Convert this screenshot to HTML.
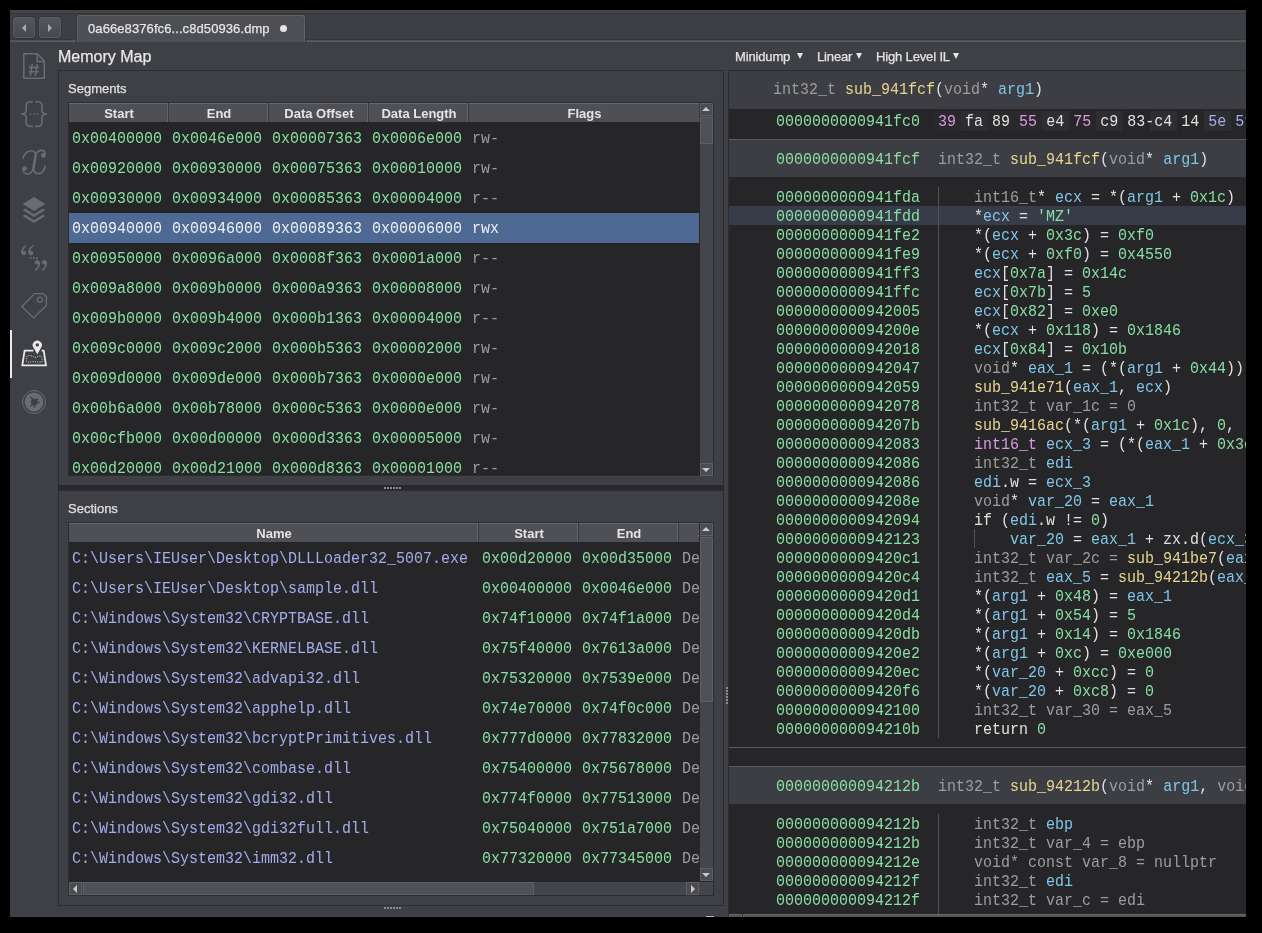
<!DOCTYPE html><html><head><meta charset="utf-8"><style>
*{margin:0;padding:0;box-sizing:border-box}
html,body{width:1262px;height:933px;overflow:hidden;background:#000}
.ab{position:absolute}
.sans{font-family:"Liberation Sans", sans-serif;-webkit-text-stroke:0.25px currentColor}
.mono{font-family:"Liberation Mono", monospace;font-size:15px;white-space:pre;transform:scaleY(1.09);transform-origin:0 1.6px}
.t{position:absolute;white-space:pre;line-height:1}
#wrap{position:absolute;left:0;top:0;width:1262px;height:933px;will-change:transform}
</style></head><body><div id="wrap">

<div class="ab" style="left:10px;top:10px;width:1236px;height:907px;background:#3f4045"></div>
<div class="ab" style="left:10px;top:10px;width:1236px;height:31px;background:#3e3f44"></div>
<div class="ab" style="left:10px;top:10px;width:1236px;height:3px;background:#444549"></div>
<div class="ab" style="left:10px;top:13px;width:1236px;height:1px;background:#37383c"></div>
<div class="ab" style="left:10px;top:39px;width:1236px;height:1px;background:#37383c"></div>
<div class="ab" style="left:10px;top:40px;width:1236px;height:1px;background:#535459"></div>
<div class="ab" style="left:10px;top:41px;width:1236px;height:1px;background:#5a5b60"></div>
<div class="ab" style="left:13px;top:17px;width:22px;height:21px;border:1px solid #5a5b60;border-radius:3px;background:linear-gradient(#55565b,#48494e);box-shadow:0 0 0 1px #35363a"></div>
<div class="ab" style="left:22px;top:23.5px;width:0;height:0;border-top:4px solid transparent;border-bottom:4px solid transparent;border-right:4.5px solid #a9aaae"></div>
<div class="ab" style="left:39px;top:17px;width:22px;height:21px;border:1px solid #5a5b60;border-radius:3px;background:linear-gradient(#55565b,#48494e);box-shadow:0 0 0 1px #35363a"></div>
<div class="ab" style="left:48px;top:24px;width:0;height:0;border-top:4px solid transparent;border-bottom:4px solid transparent;border-left:4px solid #a9aaae"></div>
<div class="ab" style="left:77px;top:15px;width:228px;height:27px;background:#4e4f54;border:1px solid #646569;border-bottom:none;border-radius:3px 3px 0 0;box-shadow:-1px 0 0 0 #35363a,1px 0 0 0 #35363a,0 -1px 0 0 #35363a"></div>
<div class="t sans" style="left:88px;top:22px;font-size:13px;letter-spacing:0.09px;color:#e6e6e6">0a66e8376fc6...c8d50936.dmp</div>
<div class="ab" style="left:280px;top:24.5px;width:7px;height:7px;border-radius:50%;background:#e6e6e6"></div>
<div class="t sans" style="left:58px;top:49px;font-size:16px;color:#e8e8e8">Memory Map</div>
<div class="ab" style="left:58px;top:70px;width:666px;height:416px;border:1px solid #2c2d31"></div>
<div class="t sans" style="left:68px;top:82px;font-size:13px;color:#e0e0e0">Segments</div>
<div class="ab" style="left:68px;top:102px;width:646px;height:374px;background:#262629;border:1px solid #2c2d31"></div>
<div class="ab" style="left:69px;top:103px;width:630px;height:19px;background:#4f5055;border-top:1px solid #69696e"></div>
<div class="ab" style="left:167px;top:103px;width:1px;height:19px;background:#646569"></div>
<div class="ab" style="left:168px;top:103px;width:1px;height:19px;background:#3a3b3f"></div>
<div class="t sans" style="left:69px;width:100px;text-align:center;top:107px;font-size:13px;font-weight:bold;-webkit-text-stroke:0;color:#e4e4e4">Start</div>
<div class="ab" style="left:267px;top:103px;width:1px;height:19px;background:#646569"></div>
<div class="ab" style="left:268px;top:103px;width:1px;height:19px;background:#3a3b3f"></div>
<div class="t sans" style="left:169px;width:100px;text-align:center;top:107px;font-size:13px;font-weight:bold;-webkit-text-stroke:0;color:#e4e4e4">End</div>
<div class="ab" style="left:367px;top:103px;width:1px;height:19px;background:#646569"></div>
<div class="ab" style="left:368px;top:103px;width:1px;height:19px;background:#3a3b3f"></div>
<div class="t sans" style="left:269px;width:100px;text-align:center;top:107px;font-size:13px;font-weight:bold;-webkit-text-stroke:0;color:#e4e4e4">Data Offset</div>
<div class="ab" style="left:467px;top:103px;width:1px;height:19px;background:#646569"></div>
<div class="ab" style="left:468px;top:103px;width:1px;height:19px;background:#3a3b3f"></div>
<div class="t sans" style="left:369px;width:100px;text-align:center;top:107px;font-size:13px;font-weight:bold;-webkit-text-stroke:0;color:#e4e4e4">Data Length</div>
<div class="ab" style="left:699px;top:103px;width:1px;height:19px;background:#3a3b3f"></div>
<div class="t sans" style="left:469px;width:231px;text-align:center;top:107px;font-size:13px;font-weight:bold;-webkit-text-stroke:0;color:#e4e4e4">Flags</div>
<div class="ab" style="left:69px;top:122px;width:631px;height:353px;overflow:hidden">
<div class="t mono" style="left:3px;top:9px;color:#88dfa3">0x00400000</div>
<div class="t mono" style="left:103px;top:9px;color:#88dfa3">0x0046e000</div>
<div class="t mono" style="left:203px;top:9px;color:#88dfa3">0x00007363</div>
<div class="t mono" style="left:303px;top:9px;color:#88dfa3">0x0006e000</div>
<div class="t mono" style="left:403px;top:9px;color:#9d9d9f">rw-</div>
<div class="t mono" style="left:3px;top:39px;color:#88dfa3">0x00920000</div>
<div class="t mono" style="left:103px;top:39px;color:#88dfa3">0x00930000</div>
<div class="t mono" style="left:203px;top:39px;color:#88dfa3">0x00075363</div>
<div class="t mono" style="left:303px;top:39px;color:#88dfa3">0x00010000</div>
<div class="t mono" style="left:403px;top:39px;color:#9d9d9f">rw-</div>
<div class="t mono" style="left:3px;top:69px;color:#88dfa3">0x00930000</div>
<div class="t mono" style="left:103px;top:69px;color:#88dfa3">0x00934000</div>
<div class="t mono" style="left:203px;top:69px;color:#88dfa3">0x00085363</div>
<div class="t mono" style="left:303px;top:69px;color:#88dfa3">0x00004000</div>
<div class="t mono" style="left:403px;top:69px;color:#9d9d9f">r--</div>
<div class="ab" style="left:0;top:91px;width:630px;height:30px;background:#4e6994"></div>
<div class="t mono" style="left:3px;top:99px;color:#f0f0f0">0x00940000</div>
<div class="t mono" style="left:103px;top:99px;color:#f0f0f0">0x00946000</div>
<div class="t mono" style="left:203px;top:99px;color:#f0f0f0">0x00089363</div>
<div class="t mono" style="left:303px;top:99px;color:#f0f0f0">0x00006000</div>
<div class="t mono" style="left:403px;top:99px;color:#f0f0f0">rwx</div>
<div class="t mono" style="left:3px;top:129px;color:#88dfa3">0x00950000</div>
<div class="t mono" style="left:103px;top:129px;color:#88dfa3">0x0096a000</div>
<div class="t mono" style="left:203px;top:129px;color:#88dfa3">0x0008f363</div>
<div class="t mono" style="left:303px;top:129px;color:#88dfa3">0x0001a000</div>
<div class="t mono" style="left:403px;top:129px;color:#9d9d9f">r--</div>
<div class="t mono" style="left:3px;top:159px;color:#88dfa3">0x009a8000</div>
<div class="t mono" style="left:103px;top:159px;color:#88dfa3">0x009b0000</div>
<div class="t mono" style="left:203px;top:159px;color:#88dfa3">0x000a9363</div>
<div class="t mono" style="left:303px;top:159px;color:#88dfa3">0x00008000</div>
<div class="t mono" style="left:403px;top:159px;color:#9d9d9f">rw-</div>
<div class="t mono" style="left:3px;top:189px;color:#88dfa3">0x009b0000</div>
<div class="t mono" style="left:103px;top:189px;color:#88dfa3">0x009b4000</div>
<div class="t mono" style="left:203px;top:189px;color:#88dfa3">0x000b1363</div>
<div class="t mono" style="left:303px;top:189px;color:#88dfa3">0x00004000</div>
<div class="t mono" style="left:403px;top:189px;color:#9d9d9f">r--</div>
<div class="t mono" style="left:3px;top:219px;color:#88dfa3">0x009c0000</div>
<div class="t mono" style="left:103px;top:219px;color:#88dfa3">0x009c2000</div>
<div class="t mono" style="left:203px;top:219px;color:#88dfa3">0x000b5363</div>
<div class="t mono" style="left:303px;top:219px;color:#88dfa3">0x00002000</div>
<div class="t mono" style="left:403px;top:219px;color:#9d9d9f">rw-</div>
<div class="t mono" style="left:3px;top:249px;color:#88dfa3">0x009d0000</div>
<div class="t mono" style="left:103px;top:249px;color:#88dfa3">0x009de000</div>
<div class="t mono" style="left:203px;top:249px;color:#88dfa3">0x000b7363</div>
<div class="t mono" style="left:303px;top:249px;color:#88dfa3">0x0000e000</div>
<div class="t mono" style="left:403px;top:249px;color:#9d9d9f">rw-</div>
<div class="t mono" style="left:3px;top:279px;color:#88dfa3">0x00b6a000</div>
<div class="t mono" style="left:103px;top:279px;color:#88dfa3">0x00b78000</div>
<div class="t mono" style="left:203px;top:279px;color:#88dfa3">0x000c5363</div>
<div class="t mono" style="left:303px;top:279px;color:#88dfa3">0x0000e000</div>
<div class="t mono" style="left:403px;top:279px;color:#9d9d9f">rw-</div>
<div class="t mono" style="left:3px;top:309px;color:#88dfa3">0x00cfb000</div>
<div class="t mono" style="left:103px;top:309px;color:#88dfa3">0x00d00000</div>
<div class="t mono" style="left:203px;top:309px;color:#88dfa3">0x000d3363</div>
<div class="t mono" style="left:303px;top:309px;color:#88dfa3">0x00005000</div>
<div class="t mono" style="left:403px;top:309px;color:#9d9d9f">rw-</div>
<div class="t mono" style="left:3px;top:339px;color:#88dfa3">0x00d20000</div>
<div class="t mono" style="left:103px;top:339px;color:#88dfa3">0x00d21000</div>
<div class="t mono" style="left:203px;top:339px;color:#88dfa3">0x000d8363</div>
<div class="t mono" style="left:303px;top:339px;color:#88dfa3">0x00001000</div>
<div class="t mono" style="left:403px;top:339px;color:#9d9d9f">r--</div>
</div>
<div class="ab" style="left:700px;top:103px;width:13px;height:372px;background:#45464b"></div>
<div class="ab" style="left:700px;top:103px;width:13px;height:13px;border:1px solid #5e5f64;background:#4b4c51"></div>
<div class="ab" style="left:702px;top:107px;width:0;height:0;border-left:4px solid transparent;border-right:4px solid transparent;border-bottom:4px solid #c8c8c8"></div>
<div class="ab" style="left:700px;top:117px;width:13px;height:27px;border:1px solid #5e5f64;background:#505156"></div>
<div class="ab" style="left:700px;top:462.5px;width:13px;height:13px;border:1px solid #5e5f64;background:#4b4c51"></div>
<div class="ab" style="left:702px;top:467.5px;width:0;height:0;border-left:4px solid transparent;border-right:4px solid transparent;border-top:4px solid #c8c8c8"></div>
<div class="ab" style="left:58px;top:485px;width:666px;height:5px;background:#29292d"></div>
<div class="ab" style="left:384px;top:487px;width:2px;height:2px;background:#8a8a8e"></div>
<div class="ab" style="left:387px;top:487px;width:2px;height:2px;background:#8a8a8e"></div>
<div class="ab" style="left:390px;top:487px;width:2px;height:2px;background:#8a8a8e"></div>
<div class="ab" style="left:393px;top:487px;width:2px;height:2px;background:#8a8a8e"></div>
<div class="ab" style="left:396px;top:487px;width:2px;height:2px;background:#8a8a8e"></div>
<div class="ab" style="left:399px;top:487px;width:2px;height:2px;background:#8a8a8e"></div>
<div class="ab" style="left:58px;top:490px;width:666px;height:416px;border:1px solid #2c2d31"></div>
<div class="t sans" style="left:68px;top:502px;font-size:13px;color:#e0e0e0">Sections</div>
<div class="ab" style="left:68px;top:522px;width:646px;height:374px;background:#262629;border:1px solid #2c2d31"></div>
<div class="ab" style="left:69px;top:523px;width:630px;height:19px;background:#4f5055;border-top:1px solid #69696e"></div>
<div class="ab" style="left:69px;top:523px;width:630px;height:19px;overflow:hidden">
<div class="ab" style="left:408px;top:0;width:1px;height:19px;background:#646569"></div>
<div class="ab" style="left:409px;top:0;width:1px;height:19px;background:#3a3b3f"></div>
<div class="t sans" style="left:0px;width:410px;text-align:center;top:4px;font-size:13px;font-weight:bold;-webkit-text-stroke:0;color:#e4e4e4">Name</div>
<div class="ab" style="left:508px;top:0;width:1px;height:19px;background:#646569"></div>
<div class="ab" style="left:509px;top:0;width:1px;height:19px;background:#3a3b3f"></div>
<div class="t sans" style="left:410px;width:100px;text-align:center;top:4px;font-size:13px;font-weight:bold;-webkit-text-stroke:0;color:#e4e4e4">Start</div>
<div class="ab" style="left:608px;top:0;width:1px;height:19px;background:#646569"></div>
<div class="ab" style="left:609px;top:0;width:1px;height:19px;background:#3a3b3f"></div>
<div class="t sans" style="left:510px;width:100px;text-align:center;top:4px;font-size:13px;font-weight:bold;-webkit-text-stroke:0;color:#e4e4e4">End</div>
<div class="ab" style="left:729px;top:0;width:1px;height:19px;background:#646569"></div>
<div class="ab" style="left:730px;top:0;width:1px;height:19px;background:#3a3b3f"></div>
<div class="t sans" style="left:629px;top:4px;font-size:13px;font-weight:bold;-webkit-text-stroke:0;color:#e4e4e4">Semantics</div>
</div>
<div class="ab" style="left:69px;top:542px;width:631px;height:339px;overflow:hidden">
<div class="t mono" style="left:3px;top:9px;color:#a3aceb">C:\Users\IEUser\Desktop\DLLLoader32_5007.exe</div>
<div class="t mono" style="left:413px;top:9px;color:#88dfa3">0x00d20000</div>
<div class="t mono" style="left:513px;top:9px;color:#88dfa3">0x00d35000</div>
<div class="t mono" style="left:613px;top:9px;color:#9d9d9f">Default</div>
<div class="t mono" style="left:3px;top:39px;color:#a3aceb">C:\Users\IEUser\Desktop\sample.dll</div>
<div class="t mono" style="left:413px;top:39px;color:#88dfa3">0x00400000</div>
<div class="t mono" style="left:513px;top:39px;color:#88dfa3">0x0046e000</div>
<div class="t mono" style="left:613px;top:39px;color:#9d9d9f">Default</div>
<div class="t mono" style="left:3px;top:69px;color:#a3aceb">C:\Windows\System32\CRYPTBASE.dll</div>
<div class="t mono" style="left:413px;top:69px;color:#88dfa3">0x74f10000</div>
<div class="t mono" style="left:513px;top:69px;color:#88dfa3">0x74f1a000</div>
<div class="t mono" style="left:613px;top:69px;color:#9d9d9f">Default</div>
<div class="t mono" style="left:3px;top:99px;color:#a3aceb">C:\Windows\System32\KERNELBASE.dll</div>
<div class="t mono" style="left:413px;top:99px;color:#88dfa3">0x75f40000</div>
<div class="t mono" style="left:513px;top:99px;color:#88dfa3">0x7613a000</div>
<div class="t mono" style="left:613px;top:99px;color:#9d9d9f">Default</div>
<div class="t mono" style="left:3px;top:129px;color:#a3aceb">C:\Windows\System32\advapi32.dll</div>
<div class="t mono" style="left:413px;top:129px;color:#88dfa3">0x75320000</div>
<div class="t mono" style="left:513px;top:129px;color:#88dfa3">0x7539e000</div>
<div class="t mono" style="left:613px;top:129px;color:#9d9d9f">Default</div>
<div class="t mono" style="left:3px;top:159px;color:#a3aceb">C:\Windows\System32\apphelp.dll</div>
<div class="t mono" style="left:413px;top:159px;color:#88dfa3">0x74e70000</div>
<div class="t mono" style="left:513px;top:159px;color:#88dfa3">0x74f0c000</div>
<div class="t mono" style="left:613px;top:159px;color:#9d9d9f">Default</div>
<div class="t mono" style="left:3px;top:189px;color:#a3aceb">C:\Windows\System32\bcryptPrimitives.dll</div>
<div class="t mono" style="left:413px;top:189px;color:#88dfa3">0x777d0000</div>
<div class="t mono" style="left:513px;top:189px;color:#88dfa3">0x77832000</div>
<div class="t mono" style="left:613px;top:189px;color:#9d9d9f">Default</div>
<div class="t mono" style="left:3px;top:219px;color:#a3aceb">C:\Windows\System32\combase.dll</div>
<div class="t mono" style="left:413px;top:219px;color:#88dfa3">0x75400000</div>
<div class="t mono" style="left:513px;top:219px;color:#88dfa3">0x75678000</div>
<div class="t mono" style="left:613px;top:219px;color:#9d9d9f">Default</div>
<div class="t mono" style="left:3px;top:249px;color:#a3aceb">C:\Windows\System32\gdi32.dll</div>
<div class="t mono" style="left:413px;top:249px;color:#88dfa3">0x774f0000</div>
<div class="t mono" style="left:513px;top:249px;color:#88dfa3">0x77513000</div>
<div class="t mono" style="left:613px;top:249px;color:#9d9d9f">Default</div>
<div class="t mono" style="left:3px;top:279px;color:#a3aceb">C:\Windows\System32\gdi32full.dll</div>
<div class="t mono" style="left:413px;top:279px;color:#88dfa3">0x75040000</div>
<div class="t mono" style="left:513px;top:279px;color:#88dfa3">0x751a7000</div>
<div class="t mono" style="left:613px;top:279px;color:#9d9d9f">Default</div>
<div class="t mono" style="left:3px;top:309px;color:#a3aceb">C:\Windows\System32\imm32.dll</div>
<div class="t mono" style="left:413px;top:309px;color:#88dfa3">0x77320000</div>
<div class="t mono" style="left:513px;top:309px;color:#88dfa3">0x77345000</div>
<div class="t mono" style="left:613px;top:309px;color:#9d9d9f">Default</div>
<div class="t mono" style="left:3px;top:339px;color:#a3aceb">C:\Windows\System32\kernel32.dll</div>
<div class="t mono" style="left:413px;top:339px;color:#88dfa3">0x75e60000</div>
<div class="t mono" style="left:513px;top:339px;color:#88dfa3">0x75f40000</div>
<div class="t mono" style="left:613px;top:339px;color:#9d9d9f">Default</div>
</div>
<div class="ab" style="left:700px;top:523px;width:13px;height:358px;background:#45464b"></div>
<div class="ab" style="left:700px;top:523px;width:13px;height:13px;border:1px solid #5e5f64;background:#4b4c51"></div>
<div class="ab" style="left:702px;top:527px;width:0;height:0;border-left:4px solid transparent;border-right:4px solid transparent;border-bottom:4px solid #c8c8c8"></div>
<div class="ab" style="left:700px;top:537px;width:13px;height:165px;border:1px solid #5e5f64;background:#505156"></div>
<div class="ab" style="left:700px;top:868px;width:13px;height:13px;border:1px solid #5e5f64;background:#4b4c51"></div>
<div class="ab" style="left:702px;top:873px;width:0;height:0;border-left:4px solid transparent;border-right:4px solid transparent;border-top:4px solid #c8c8c8"></div>
<div class="ab" style="left:69px;top:882px;width:631px;height:13px;background:#45464b"></div>
<div class="ab" style="left:69px;top:882px;width:13px;height:13px;border:1px solid #5e5f64;background:#4b4c51"></div>
<div class="ab" style="left:73px;top:884.5px;width:0;height:0;border-top:4px solid transparent;border-bottom:4px solid transparent;border-right:4px solid #c8c8c8"></div>
<div class="ab" style="left:83px;top:882px;width:451px;height:13px;border:1px solid #5e5f64;background:#505156"></div>
<div class="ab" style="left:686px;top:882px;width:13px;height:13px;border:1px solid #5e5f64;background:#4b4c51"></div>
<div class="ab" style="left:691px;top:884.5px;width:0;height:0;border-top:4px solid transparent;border-bottom:4px solid transparent;border-left:4px solid #c8c8c8"></div>
<div class="ab" style="left:700px;top:882px;width:13px;height:13px;background:#45464b"></div>
<div class="ab" style="left:706px;top:916px;width:8px;height:1px;background:#b8b8bb"></div>
<div class="ab" style="left:384px;top:907px;width:2px;height:2px;background:#8a8a8e"></div>
<div class="ab" style="left:387px;top:907px;width:2px;height:2px;background:#8a8a8e"></div>
<div class="ab" style="left:390px;top:907px;width:2px;height:2px;background:#8a8a8e"></div>
<div class="ab" style="left:393px;top:907px;width:2px;height:2px;background:#8a8a8e"></div>
<div class="ab" style="left:396px;top:907px;width:2px;height:2px;background:#8a8a8e"></div>
<div class="ab" style="left:399px;top:907px;width:2px;height:2px;background:#8a8a8e"></div>
<div class="ab" style="left:726px;top:687px;width:2px;height:2px;background:#8a8a8e"></div>
<div class="ab" style="left:726px;top:690px;width:2px;height:2px;background:#8a8a8e"></div>
<div class="ab" style="left:726px;top:693px;width:2px;height:2px;background:#8a8a8e"></div>
<div class="ab" style="left:726px;top:696px;width:2px;height:2px;background:#8a8a8e"></div>
<div class="ab" style="left:726px;top:699px;width:2px;height:2px;background:#8a8a8e"></div>
<div class="ab" style="left:726px;top:702px;width:2px;height:2px;background:#8a8a8e"></div>
<svg class="ab" style="left:0;top:0" width="60" height="430" viewBox="0 0 60 430">
<g fill="none" stroke="#6b6c71" stroke-width="1.5">
<path d="M23.8,53.8 H37.2 L44.3,61 V78.3 H23.8 Z"/>
<path d="M37.2,53.8 V61.6 H44.3"/>
<path d="M32.3,63.8 L30.4,75.8 M37.3,63.8 L35.4,75.8 M29,67.4 H39.2 M28.6,71.8 H38.8" stroke-width="1.6"/>
<path d="M32.8,101.8 H30.4 Q26.2,101.8 26.2,106 V110.6 Q26.2,114 21.2,114 Q26.2,114 26.2,117.4 V122.2 Q26.2,126.4 30.4,126.4 H32.8" stroke-width="1.6"/>
<path d="M35.2,101.8 H37.8 Q42,101.8 42,106 V110.6 Q42,114 47,114 Q42,114 42,117.4 V122.2 Q42,126.4 37.8,126.4 H35.2" stroke-width="1.6"/>
<path d="M22.8,158.8 C24.5,153 28.5,150.3 32,150.8 C35,151.3 35.8,153.5 35.5,156.5" stroke-width="1.6"/><path d="M35.7,155.5 C35.2,160 33.8,165 33.2,169.5" stroke-width="2.5"/><path d="M33.2,169 C32,173 28.5,174.6 25.8,173.8 C23.6,173.1 22.8,170.8 23.6,169" stroke-width="1.6"/>
<path d="M35.4,155.5 C36.5,151.8 39.5,150.2 42.3,150.4 C44.8,150.7 45.6,153 44.7,155" stroke-width="1.6"/><path d="M33.1,168.5 C33.8,172.5 37,174.3 40,173.4 C43,172.4 44.8,169 45.3,165.3" stroke-width="1.6"/>
<path d="M21.8,306.6 L34.6,293.6 H43.1 L46.4,296.9 V305.5 L33.5,317.9 Z" stroke-width="1.4"/>
<circle cx="39.9" cy="299.8" r="2.6" stroke-width="1.2"/>
<circle cx="34" cy="402" r="11.5" stroke-width="1"/>
</g>
<g fill="#6b6c71">
<circle cx="32.2" cy="101.8" r="0"/>
<circle cx="30.6" cy="114.1" r="0.9"/><circle cx="34" cy="114.1" r="0.9"/><circle cx="37.3" cy="114.1" r="0.9"/>
<circle cx="24.6" cy="168.6" r="2.3"/><circle cx="43.4" cy="155.4" r="2.3"/>
<path d="M34,197.1 L45.2,204 L34,211 L22.6,204 Z"/>
<path d="M22.6,210 L25,208.6 L34,214.2 L43,208.6 L45.2,210 L34,217 Z"/>
<path d="M22.6,216 L25,214.6 L34,220.2 L43,214.6 L45.2,216 L34,223 Z"/>
<circle cx="23.8" cy="253" r="2.3"/><circle cx="30.9" cy="253" r="2.3"/>
<circle cx="37.2" cy="262.3" r="2.3"/><circle cx="44.2" cy="262.3" r="2.3"/>
<rect x="29.7" y="257.1" width="1.8" height="1.8"/><rect x="32.9" y="257.1" width="1.8" height="1.8"/><rect x="36.2" y="257.1" width="1.8" height="1.8"/>
<circle cx="34" cy="402" r="9.4"/>
</g>
<g fill="none" stroke="#6b6c71" stroke-width="1.5">
<path d="M25.9,245.6 Q21.6,249 21.7,253.3 M33,245.6 Q28.7,249 28.8,253.3"/>
<path d="M39.4,262 Q39.6,267 35.2,270.3 M46.4,262 Q46.6,267 42.2,270.3"/>
</g>
<g fill="#3f4045">
<circle cx="34.3" cy="402" r="3.4"/>
</g>
<g stroke="#3f4045" stroke-width="1.2">
<path d="M30.5,397 L33,399.5 M38.5,398.5 L36.5,400 M39.8,402.5 H37 M34.5,408 V405 M30.5,406.5 L32.2,405"/>
</g>
<g fill="none" stroke="#e8e8e9" stroke-width="1.8">
<path d="M33.4,350.6 H24.6 L22.3,365.4 H46 L43.7,350.6 H41.6"/>
</g>
<path fill="#e8e8e9" fill-rule="evenodd" d="M37.3,354.2 L33.4,347.6 A4.6,4.6 0 1 1 41.2,347.6 Z M37.3,343.2 A1.7,1.7 0 1 0 37.3,346.6 A1.7,1.7 0 1 0 37.3,343.2 Z"/>
<path fill="none" stroke="#d8d8d9" stroke-width="1" stroke-dasharray="1,1.3" d="M26.5,361.5 V357.5 C27,355.5 28.5,355.3 30,355.5 C32,355.8 33.5,356.8 35,357.5 C37,357 38.5,356 40.5,355.8 C41.8,357 42.6,359 42,362 C39,362.3 36.5,361.8 33.5,361.7 C31,361.8 29.5,362.2 27.5,362.2"/>
<rect x="10" y="330" width="2" height="48" fill="#e8e8e9"/>
</svg>
<div class="t sans" style="left:735px;top:50px;font-size:13px;letter-spacing:-0.15px;color:#e4e4e4">Minidump</div>
<div class="ab" style="left:797px;top:53px;width:0;height:0;border-left:3px solid transparent;border-right:3px solid transparent;border-top:6.5px solid #e4e4e4"></div>
<div class="t sans" style="left:817px;top:50px;font-size:13px;letter-spacing:-0.15px;color:#e4e4e4">Linear</div>
<div class="ab" style="left:856px;top:53px;width:0;height:0;border-left:3px solid transparent;border-right:3px solid transparent;border-top:6.5px solid #e4e4e4"></div>
<div class="t sans" style="left:876px;top:50px;font-size:13px;letter-spacing:-0.15px;color:#e4e4e4">High Level IL</div>
<div class="ab" style="left:953px;top:53px;width:0;height:0;border-left:3px solid transparent;border-right:3px solid transparent;border-top:6.5px solid #e4e4e4"></div>
<div class="ab" style="left:728px;top:70px;width:518px;height:847px;background:#2c2d31"></div>
<div class="ab" style="left:729px;top:71px;width:517px;height:846px;background:#262629;overflow:hidden">
<div class="ab" style="left:0px;top:0px;width:517px;height:38px;background:#3d3e43;"></div>
<div class="t mono" style="left:44px;top:11px"><span style="color:#9d9d9f">int32_t </span><span style="color:#e9d590">sub_941fcf</span><span style="color:#e0e0e0">(</span><span style="color:#9d9d9f">void</span><span style="color:#e0e0e0">* </span><span style="color:#80c6e9">arg1</span><span style="color:#e0e0e0">)</span></div>
<div class="ab" style="left:205px;top:40px;width:27px;height:20px;background:#29292c;"></div>
<div class="ab" style="left:232px;top:40px;width:27px;height:20px;background:#2e2e32;"></div>
<div class="ab" style="left:259px;top:40px;width:27px;height:20px;background:#29292c;"></div>
<div class="ab" style="left:286px;top:40px;width:27px;height:20px;background:#29292c;"></div>
<div class="ab" style="left:313px;top:40px;width:27px;height:20px;background:#2e2e32;"></div>
<div class="ab" style="left:367px;top:40px;width:27px;height:20px;background:#2e2e32;"></div>
<div class="ab" style="left:421px;top:40px;width:27px;height:20px;background:#2e2e32;"></div>
<div class="ab" style="left:475px;top:40px;width:27px;height:20px;background:#2e2e32;"></div>
<div class="t mono" style="left:47px;top:43px"><span style="color:#88dfa3">0000000000941fc0</span></div>
<div class="t mono" style="left:191px;top:43px"><span style="color:#e0e0e0">  </span><span style="color:#d99ae0">39</span><span style="color:#e0e0e0"> </span><span style="color:#e0e0e0">fa</span><span style="color:#e0e0e0"> </span><span style="color:#e0e0e0">89</span><span style="color:#e0e0e0"> </span><span style="color:#d99ae0">55</span><span style="color:#e0e0e0"> </span><span style="color:#e0e0e0">e4</span><span style="color:#e0e0e0"> </span><span style="color:#d99ae0">75</span><span style="color:#e0e0e0"> </span><span style="color:#e0e0e0">c9</span><span style="color:#e0e0e0"> </span><span style="color:#e0e0e0">83</span><span style="color:#e0e0e0">-</span><span style="color:#e0e0e0">c4</span><span style="color:#e0e0e0"> </span><span style="color:#e0e0e0">14</span><span style="color:#e0e0e0"> </span><span style="color:#a3aceb">5e</span><span style="color:#e0e0e0"> </span><span style="color:#a3aceb">5f</span><span style="color:#e0e0e0"></span></div>
<div class="ab" style="left:0px;top:68px;width:517px;height:1px;background:#5b5c61;"></div>
<div class="ab" style="left:0px;top:69px;width:517px;height:37px;background:#3d3e43;"></div>
<div class="t mono" style="left:47px;top:81px"><span style="color:#88dfa3">0000000000941fcf</span><span style="color:#e0e0e0">  </span><span style="color:#9d9d9f">int32_t </span><span style="color:#e9d590">sub_941fcf</span><span style="color:#e0e0e0">(</span><span style="color:#9d9d9f">void</span><span style="color:#e0e0e0">* </span><span style="color:#80c6e9">arg1</span><span style="color:#e0e0e0">)</span></div>
<div class="ab" style="left:0px;top:135px;width:517px;height:19px;background:#383c49;"></div>
<div class="ab" style="left:209px;top:116px;width:1px;height:551px;background:#515256;"></div>
<div class="ab" style="left:245px;top:458px;width:1px;height:19px;background:#515256;"></div>
<div class="t mono" style="left:47px;top:119px"><span style="color:#88dfa3">0000000000941fda</span></div>
<div class="t mono" style="left:245px;top:119px"><span style="color:#9d9d9f">int16_t</span><span style="color:#e0e0e0">* </span><span style="color:#80c6e9">ecx</span><span style="color:#e0e0e0"> = *(</span><span style="color:#80c6e9">arg1</span><span style="color:#e0e0e0"> + </span><span style="color:#88dfa3">0x1c</span><span style="color:#e0e0e0">)</span></div>
<div class="t mono" style="left:47px;top:138px"><span style="color:#88dfa3">0000000000941fdd</span></div>
<div class="t mono" style="left:245px;top:138px"><span style="color:#e0e0e0">*</span><span style="color:#80c6e9">ecx</span><span style="color:#e0e0e0"> = </span><span style="color:#88dfa3">&#x27;MZ&#x27;</span></div>
<div class="t mono" style="left:47px;top:157px"><span style="color:#88dfa3">0000000000941fe2</span></div>
<div class="t mono" style="left:245px;top:157px"><span style="color:#e0e0e0">*(</span><span style="color:#80c6e9">ecx</span><span style="color:#e0e0e0"> + </span><span style="color:#88dfa3">0x3c</span><span style="color:#e0e0e0">) = </span><span style="color:#88dfa3">0xf0</span></div>
<div class="t mono" style="left:47px;top:176px"><span style="color:#88dfa3">0000000000941fe9</span></div>
<div class="t mono" style="left:245px;top:176px"><span style="color:#e0e0e0">*(</span><span style="color:#80c6e9">ecx</span><span style="color:#e0e0e0"> + </span><span style="color:#88dfa3">0xf0</span><span style="color:#e0e0e0">) = </span><span style="color:#88dfa3">0x4550</span></div>
<div class="t mono" style="left:47px;top:195px"><span style="color:#88dfa3">0000000000941ff3</span></div>
<div class="t mono" style="left:245px;top:195px"><span style="color:#80c6e9">ecx</span><span style="color:#e0e0e0">[</span><span style="color:#88dfa3">0x7a</span><span style="color:#e0e0e0">] = </span><span style="color:#88dfa3">0x14c</span></div>
<div class="t mono" style="left:47px;top:214px"><span style="color:#88dfa3">0000000000941ffc</span></div>
<div class="t mono" style="left:245px;top:214px"><span style="color:#80c6e9">ecx</span><span style="color:#e0e0e0">[</span><span style="color:#88dfa3">0x7b</span><span style="color:#e0e0e0">] = </span><span style="color:#88dfa3">5</span></div>
<div class="t mono" style="left:47px;top:233px"><span style="color:#88dfa3">0000000000942005</span></div>
<div class="t mono" style="left:245px;top:233px"><span style="color:#80c6e9">ecx</span><span style="color:#e0e0e0">[</span><span style="color:#88dfa3">0x82</span><span style="color:#e0e0e0">] = </span><span style="color:#88dfa3">0xe0</span></div>
<div class="t mono" style="left:47px;top:252px"><span style="color:#88dfa3">000000000094200e</span></div>
<div class="t mono" style="left:245px;top:252px"><span style="color:#e0e0e0">*(</span><span style="color:#80c6e9">ecx</span><span style="color:#e0e0e0"> + </span><span style="color:#88dfa3">0x118</span><span style="color:#e0e0e0">) = </span><span style="color:#88dfa3">0x1846</span></div>
<div class="t mono" style="left:47px;top:271px"><span style="color:#88dfa3">0000000000942018</span></div>
<div class="t mono" style="left:245px;top:271px"><span style="color:#80c6e9">ecx</span><span style="color:#e0e0e0">[</span><span style="color:#88dfa3">0x84</span><span style="color:#e0e0e0">] = </span><span style="color:#88dfa3">0x10b</span></div>
<div class="t mono" style="left:47px;top:290px"><span style="color:#88dfa3">0000000000942047</span></div>
<div class="t mono" style="left:245px;top:290px"><span style="color:#9d9d9f">void</span><span style="color:#e0e0e0">* </span><span style="color:#80c6e9">eax_1</span><span style="color:#e0e0e0"> = (*(</span><span style="color:#80c6e9">arg1</span><span style="color:#e0e0e0"> + </span><span style="color:#88dfa3">0x44</span><span style="color:#e0e0e0">))</span></div>
<div class="t mono" style="left:47px;top:309px"><span style="color:#88dfa3">0000000000942059</span></div>
<div class="t mono" style="left:245px;top:309px"><span style="color:#e9d590">sub_941e71</span><span style="color:#e0e0e0">(</span><span style="color:#80c6e9">eax_1</span><span style="color:#e0e0e0">, </span><span style="color:#80c6e9">ecx</span><span style="color:#e0e0e0">)</span></div>
<div class="t mono" style="left:47px;top:328px"><span style="color:#88dfa3">0000000000942078</span></div>
<div class="t mono" style="left:245px;top:328px"><span style="color:#9d9d9f">int32_t var_1c = 0</span></div>
<div class="t mono" style="left:47px;top:347px"><span style="color:#88dfa3">000000000094207b</span></div>
<div class="t mono" style="left:245px;top:347px"><span style="color:#e9d590">sub_9416ac</span><span style="color:#e0e0e0">(*(</span><span style="color:#80c6e9">arg1</span><span style="color:#e0e0e0"> + </span><span style="color:#88dfa3">0x1c</span><span style="color:#e0e0e0">), </span><span style="color:#88dfa3">0</span><span style="color:#e0e0e0">, &#x27;</span></div>
<div class="t mono" style="left:47px;top:366px"><span style="color:#88dfa3">0000000000942083</span></div>
<div class="t mono" style="left:245px;top:366px"><span style="color:#d99ae0">int16_t </span><span style="color:#80c6e9">ecx_3</span><span style="color:#e0e0e0"> = (*(</span><span style="color:#80c6e9">eax_1</span><span style="color:#e0e0e0"> + </span><span style="color:#88dfa3">0x3c</span><span style="color:#e0e0e0">))</span></div>
<div class="t mono" style="left:47px;top:385px"><span style="color:#88dfa3">0000000000942086</span></div>
<div class="t mono" style="left:245px;top:385px"><span style="color:#9d9d9f">int32_t </span><span style="color:#80c6e9">edi</span></div>
<div class="t mono" style="left:47px;top:404px"><span style="color:#88dfa3">0000000000942086</span></div>
<div class="t mono" style="left:245px;top:404px"><span style="color:#80c6e9">edi</span><span style="color:#e0e0e0">.w = </span><span style="color:#80c6e9">ecx_3</span></div>
<div class="t mono" style="left:47px;top:423px"><span style="color:#88dfa3">000000000094208e</span></div>
<div class="t mono" style="left:245px;top:423px"><span style="color:#9d9d9f">void</span><span style="color:#e0e0e0">* </span><span style="color:#80c6e9">var_20</span><span style="color:#e0e0e0"> = </span><span style="color:#80c6e9">eax_1</span></div>
<div class="t mono" style="left:47px;top:442px"><span style="color:#88dfa3">0000000000942094</span></div>
<div class="t mono" style="left:245px;top:442px"><span style="color:#e0e0e0">if (</span><span style="color:#80c6e9">edi</span><span style="color:#e0e0e0">.w != </span><span style="color:#88dfa3">0</span><span style="color:#e0e0e0">)</span></div>
<div class="t mono" style="left:47px;top:461px"><span style="color:#88dfa3">0000000000942123</span></div>
<div class="t mono" style="left:245px;top:461px"><span style="color:#e0e0e0">    </span><span style="color:#80c6e9">var_20</span><span style="color:#e0e0e0"> = </span><span style="color:#80c6e9">eax_1</span><span style="color:#e0e0e0"> + zx.d(</span><span style="color:#80c6e9">ecx_3</span><span style="color:#e0e0e0">)</span></div>
<div class="t mono" style="left:47px;top:480px"><span style="color:#88dfa3">00000000009420c1</span></div>
<div class="t mono" style="left:245px;top:480px"><span style="color:#9d9d9f">int32_t var_2c = </span><span style="color:#e9d590">sub_941be7</span><span style="color:#e0e0e0">(</span><span style="color:#80c6e9">eax_1</span><span style="color:#e0e0e0">)</span></div>
<div class="t mono" style="left:47px;top:499px"><span style="color:#88dfa3">00000000009420c4</span></div>
<div class="t mono" style="left:245px;top:499px"><span style="color:#9d9d9f">int32_t </span><span style="color:#80c6e9">eax_5</span><span style="color:#e0e0e0"> = </span><span style="color:#e9d590">sub_94212b</span><span style="color:#e0e0e0">(</span><span style="color:#80c6e9">eax_1</span><span style="color:#e0e0e0">)</span></div>
<div class="t mono" style="left:47px;top:518px"><span style="color:#88dfa3">00000000009420d1</span></div>
<div class="t mono" style="left:245px;top:518px"><span style="color:#e0e0e0">*(</span><span style="color:#80c6e9">arg1</span><span style="color:#e0e0e0"> + </span><span style="color:#88dfa3">0x48</span><span style="color:#e0e0e0">) = </span><span style="color:#80c6e9">eax_1</span></div>
<div class="t mono" style="left:47px;top:537px"><span style="color:#88dfa3">00000000009420d4</span></div>
<div class="t mono" style="left:245px;top:537px"><span style="color:#e0e0e0">*(</span><span style="color:#80c6e9">arg1</span><span style="color:#e0e0e0"> + </span><span style="color:#88dfa3">0x54</span><span style="color:#e0e0e0">) = </span><span style="color:#88dfa3">5</span></div>
<div class="t mono" style="left:47px;top:556px"><span style="color:#88dfa3">00000000009420db</span></div>
<div class="t mono" style="left:245px;top:556px"><span style="color:#e0e0e0">*(</span><span style="color:#80c6e9">arg1</span><span style="color:#e0e0e0"> + </span><span style="color:#88dfa3">0x14</span><span style="color:#e0e0e0">) = </span><span style="color:#88dfa3">0x1846</span></div>
<div class="t mono" style="left:47px;top:575px"><span style="color:#88dfa3">00000000009420e2</span></div>
<div class="t mono" style="left:245px;top:575px"><span style="color:#e0e0e0">*(</span><span style="color:#80c6e9">arg1</span><span style="color:#e0e0e0"> + </span><span style="color:#88dfa3">0xc</span><span style="color:#e0e0e0">) = </span><span style="color:#88dfa3">0xe000</span></div>
<div class="t mono" style="left:47px;top:594px"><span style="color:#88dfa3">00000000009420ec</span></div>
<div class="t mono" style="left:245px;top:594px"><span style="color:#e0e0e0">*(</span><span style="color:#80c6e9">var_20</span><span style="color:#e0e0e0"> + </span><span style="color:#88dfa3">0xcc</span><span style="color:#e0e0e0">) = </span><span style="color:#88dfa3">0</span></div>
<div class="t mono" style="left:47px;top:613px"><span style="color:#88dfa3">00000000009420f6</span></div>
<div class="t mono" style="left:245px;top:613px"><span style="color:#e0e0e0">*(</span><span style="color:#80c6e9">var_20</span><span style="color:#e0e0e0"> + </span><span style="color:#88dfa3">0xc8</span><span style="color:#e0e0e0">) = </span><span style="color:#88dfa3">0</span></div>
<div class="t mono" style="left:47px;top:632px"><span style="color:#88dfa3">0000000000942100</span></div>
<div class="t mono" style="left:245px;top:632px"><span style="color:#9d9d9f">int32_t var_30 = eax_5</span></div>
<div class="t mono" style="left:47px;top:651px"><span style="color:#88dfa3">000000000094210b</span></div>
<div class="t mono" style="left:245px;top:651px"><span style="color:#e0e0e0">return </span><span style="color:#88dfa3">0</span></div>
<div class="ab" style="left:0px;top:676px;width:517px;height:1px;background:#5b5c61;"></div>
<div class="ab" style="left:0px;top:695px;width:517px;height:1px;background:#5b5c61;"></div>
<div class="ab" style="left:0px;top:696px;width:517px;height:37px;background:#3d3e43;"></div>
<div class="t mono" style="left:47px;top:708px"><span style="color:#88dfa3">000000000094212b</span><span style="color:#e0e0e0">  </span><span style="color:#9d9d9f">int32_t </span><span style="color:#e9d590">sub_94212b</span><span style="color:#e0e0e0">(</span><span style="color:#9d9d9f">void</span><span style="color:#e0e0e0">* </span><span style="color:#80c6e9">arg1</span><span style="color:#e0e0e0">, </span><span style="color:#9d9d9f">void</span><span style="color:#e0e0e0">* </span><span style="color:#80c6e9">arg2</span><span style="color:#e0e0e0">)</span></div>
<div class="ab" style="left:209px;top:743px;width:1px;height:120px;background:#515256;"></div>
<div class="t mono" style="left:47px;top:746px"><span style="color:#88dfa3">000000000094212b</span></div>
<div class="t mono" style="left:245px;top:746px"><span style="color:#9d9d9f">int32_t </span><span style="color:#80c6e9">ebp</span></div>
<div class="t mono" style="left:47px;top:765px"><span style="color:#88dfa3">000000000094212b</span></div>
<div class="t mono" style="left:245px;top:765px"><span style="color:#9d9d9f">int32_t var_4 = ebp</span></div>
<div class="t mono" style="left:47px;top:784px"><span style="color:#88dfa3">000000000094212e</span></div>
<div class="t mono" style="left:245px;top:784px"><span style="color:#9d9d9f">void* const var_8 = nullptr</span></div>
<div class="t mono" style="left:47px;top:803px"><span style="color:#88dfa3">000000000094212f</span></div>
<div class="t mono" style="left:245px;top:803px"><span style="color:#9d9d9f">int32_t </span><span style="color:#80c6e9">edi</span></div>
<div class="t mono" style="left:47px;top:822px"><span style="color:#88dfa3">000000000094212f</span></div>
<div class="t mono" style="left:245px;top:822px"><span style="color:#9d9d9f">int32_t var_c = edi</span></div>
<div class="ab" style="left:0px;top:843px;width:13px;height:3px;background:#515257;border:1px solid #68696e;border-bottom:none"></div>
<div class="ab" style="left:14px;top:843px;width:503px;height:3px;background:#55565b;border-top:1px solid #69696e;border-left:1px solid #69696e"></div>
</div>
</div></body></html>
